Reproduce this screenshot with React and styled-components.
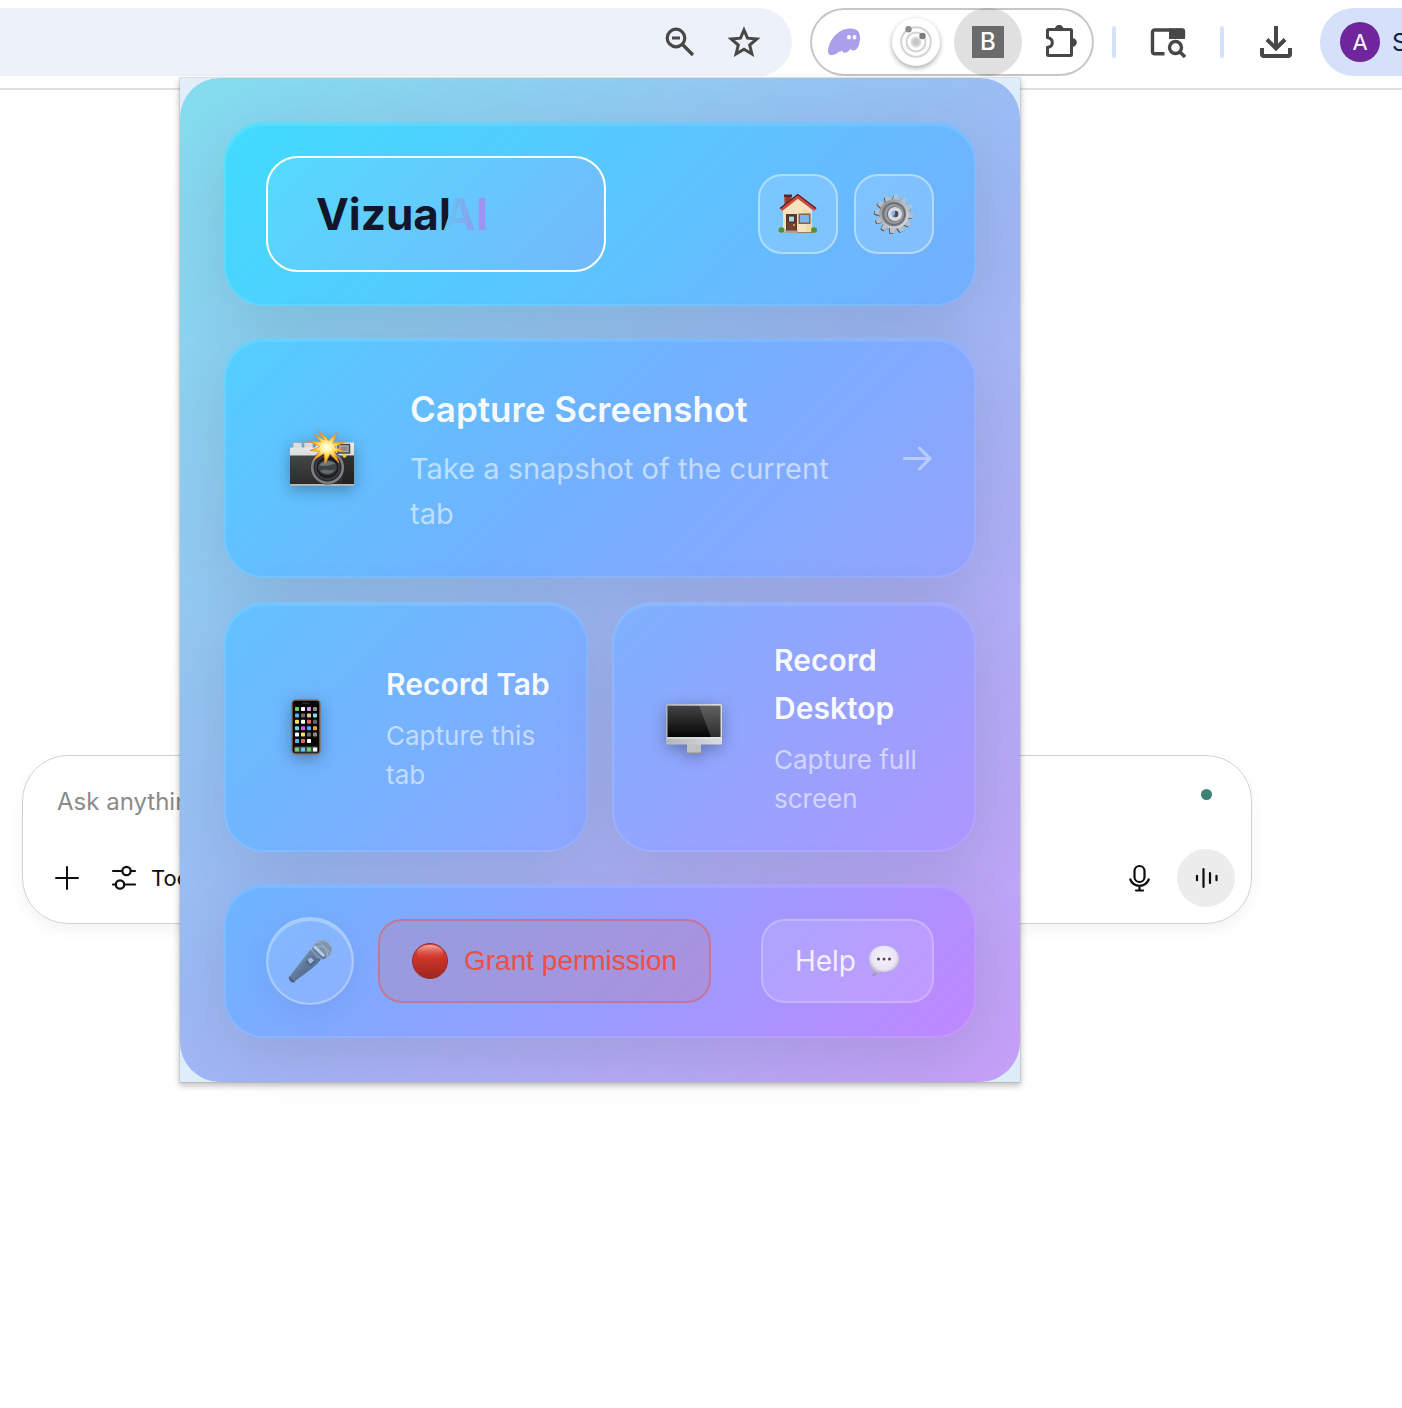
import React from "react";
import styled, { createGlobalStyle, css } from "styled-components";

const GlobalStyle = createGlobalStyle`
  *, *::before, *::after { box-sizing: border-box; }
  body {
    margin: 0;
    background: #ffffff;
    font-family: Inter, "Liberation Sans", sans-serif;
    overflow-x: hidden;
  }
  button, input { font-family: inherit; margin: 0; }
  button { cursor: pointer; }
  svg { display: block; flex: none; }
`;

const Page = styled.div`
  position: relative;
  min-height: 100vh;
  overflow: hidden;
`;

/* ---------- browser toolbar ---------- */

const Toolbar = styled.header`
  display: flex;
  align-items: center;
  gap: 18px;
  height: 90px;
  padding: 8px 0 12px;
  border-bottom: 2px solid #dfe0e1;
`;

const AddressBar = styled.div`
  flex: 1;
  display: flex;
  align-items: center;
  justify-content: flex-end;
  height: 68px;
  padding-right: 16px;
  border-radius: 0 34px 34px 0;
  background: #edf2fa;
`;

const ToolButton = styled.button`
  display: flex;
  align-items: center;
  justify-content: center;
  width: ${(p) => (p.$compact ? 64 : 68)}px;
  height: 68px;
  padding: 0;
  border: 0;
  border-radius: 50%;
  background: ${(p) => (p.$active ? "rgba(0, 0, 0, 0.12)" : "transparent")};
  color: #474747;
`;

const Extensions = styled.div`
  display: flex;
  gap: 4px;
  border-radius: 34px;
  box-shadow: inset 0 0 0 2px #c7c7c7;
`;

const Badge = styled.span`
  display: flex;
  align-items: center;
  justify-content: center;
  width: 48px;
  height: 48px;
  border-radius: 50%;
  background: #ffffff;
  box-shadow: 0 2px 5px rgba(0, 0, 0, 0.35);
`;

const LetterTile = styled.span`
  width: 32px;
  height: 32px;
  background: #6b6b6b;
  color: #ffffff;
  font-size: 24px;
  line-height: 32px;
  font-weight: 500;
  text-align: center;
`;

const Separator = styled.span`
  width: 4px;
  height: 32px;
  border-radius: 2px;
  background: #d5e2fb;
`;

const ProfileGroup = styled.div`
  display: flex;
  gap: 10px;
`;

const Profile = styled.button`
  display: flex;
  align-items: center;
  gap: 12px;
  width: 82px;
  height: 68px;
  padding: 0 0 0 20px;
  border: 0;
  border-radius: 34px 0 0 34px;
  background: #d5e1fb;
  color: #0a1f49;
  font-size: 24px;
  overflow: hidden;
`;

const Avatar = styled.span`
  flex: none;
  width: 40px;
  height: 40px;
  border-radius: 50%;
  background: #6f259b;
  color: #ffffff;
  font-size: 22px;
  line-height: 40px;
  text-align: center;
`;

/* ---------- chat page behind the popup ---------- */

const Chat = styled.main`
  padding: 665px 150px 0 22px;
`;

const Composer = styled.form`
  display: flex;
  flex-direction: column;
  gap: 19px;
  padding: 16px 16px 16px 26px;
  border: 1px solid #d2d2d2;
  border-radius: 46px;
  box-shadow: 0 6px 14px rgba(0, 0, 0, 0.05);
`;

const ComposerRow = styled.div`
  display: flex;
  align-items: center;
  height: 58px;
`;

const Prompt = styled.input`
  flex: 1;
  min-width: 0;
  height: 58px;
  padding: 0 0 0 8px;
  border: 0;
  outline: 0;
  background: transparent;
  color: #0d0d0d;
  font-size: 24px;
  &::placeholder { color: #8a8a8a; opacity: 1; }
`;

const StatusSlot = styled.div`
  display: flex;
  justify-content: center;
  align-self: flex-start;
  width: 58px;
  padding-top: 17px;
`;

const StatusDot = styled.span`
  width: 11px;
  height: 11px;
  border-radius: 50%;
  background: #3c8275;
`;

const ComposerButton = styled.button`
  display: flex;
  align-items: center;
  gap: 14px;
  height: 58px;
  padding: 0 6px;
  border: 0;
  background: transparent;
  color: #0d0d0d;
  font-size: 22px;
`;

const ComposerActions = styled.div`
  display: flex;
  align-items: center;
  gap: 20px;
`;

const Spacer = styled.div`
  flex: 1;
`;

const VoiceButton = styled(ComposerButton)`
  justify-content: center;
  width: 58px;
  padding: 0;
  border-radius: 50%;
  background: #ececec;
`;

/* ---------- extension popup ---------- */

const Popup = styled.section`
  position: absolute;
  top: 78px;
  left: 180px;
  width: 840px;
  background: linear-gradient(135deg, #e2eefb, #dcecf9);
  box-shadow: 0 0 0 1px rgba(0, 0, 0, 0.08), 0 3px 6px 1px rgba(0, 0, 0, 0.24);
`;

const Panel = styled.div`
  display: flex;
  flex-direction: column;
  gap: 32px;
  padding: 44px;
  border-radius: 40px;
  background: linear-gradient(135deg, #83ddee 0%, #9cb9f4 50%, #c69ff7 100%);
`;

const tints = {
  header: "#40dcfd, #5ac6ff 50%, #75adff",
  screenshot: "#53cfff, #72b0ff 50%, #95a2fd",
  tab: "#62c2ff, #75b2ff 50%, #8fa5ff",
  desktop: "#7cb1ff, #96a3fe 50%, #ad95ff",
  footer: "#6ab5ff, #959eff 50%, #c087ff",
};

const glass = css`
  border: 2px solid rgba(255, 255, 255, 0.11);
  border-radius: 40px;
  background: linear-gradient(135deg, ${(p) => tints[p.$tint]}) border-box;
  box-shadow: 0 16px 64px rgba(0, 0, 0, 0.1),
    inset 0 2px 0 rgba(255, 255, 255, 0.1);
`;

const TopCard = styled.div`
  ${glass}
  display: flex;
  align-items: center;
  justify-content: space-between;
  padding: 32px 40px;
`;

const Logo = styled.h1`
  display: flex;
  align-items: center;
  width: 340px;
  height: 116px;
  margin: 0;
  padding: 0 48px;
  border: 2px solid #ffffff;
  border-radius: 32px;
  background: linear-gradient(135deg, rgba(255, 255, 255, 0.08), rgba(150, 170, 245, 0.38));
  color: #12162b;
  font-size: 44px;
  line-height: 56px;
  font-weight: 700;
`;

const LogoAccent = styled.span`
  margin-left: -8px;
  background: linear-gradient(90deg, #5ecbf4, #84a6ef 55%, #ab8bf6);
  background-clip: text;
  -webkit-background-clip: text;
  color: transparent;
`;

const ButtonGroup = styled.div`
  display: flex;
  gap: 16px;
`;

const IconButton = styled.button`
  display: flex;
  align-items: center;
  justify-content: center;
  width: 80px;
  height: 80px;
  padding: 0;
  border: 2px solid rgba(255, 255, 255, 0.4);
  border-radius: 24px;
  background: rgba(255, 255, 255, 0.15);
`;

const Actions = styled.div`
  display: flex;
  flex-direction: column;
  gap: 24px;
`;

const ActionRow = styled.div`
  display: grid;
  grid-template-columns: 1fr 1fr;
  gap: 24px;
`;

const ActionCard = styled.button`
  ${glass}
  display: flex;
  align-items: center;
  gap: 32px;
  padding: ${(p) => (p.$large ? "40px" : "32px")};
  text-align: left;
`;

const ActionIcon = styled.span`
  display: flex;
  flex: none;
  justify-content: center;
  width: ${(p) => (p.$large ? 112 : 96)}px;
  filter: drop-shadow(0 4px 8px rgba(0, 0, 0, 0.3));
`;

const ActionText = styled.span`
  display: flex;
  flex: 1;
  flex-direction: column;
  gap: 8px;
  min-width: 0;
`;

const ActionTitle = styled.span`
  color: rgba(255, 255, 255, 0.95);
  font-size: ${(p) => (p.$large ? 35 : 30)}px;
  line-height: ${(p) => (p.$large ? 58 : 48)}px;
  font-weight: 600;
`;

const ActionNote = styled.span`
  color: rgba(255, 255, 255, 0.57);
  font-size: ${(p) => (p.$large ? 29 : 26)}px;
  line-height: ${(p) => (p.$large ? 45 : 39)}px;
  font-weight: 400;
`;

const BottomCard = styled.div`
  ${glass}
  display: flex;
  align-items: center;
  gap: 24px;
  padding: 31px 40px;
`;

const MicButton = styled.button`
  display: flex;
  align-items: center;
  justify-content: center;
  width: 88px;
  height: 88px;
  padding: 0;
  border: 2px solid rgba(255, 255, 255, 0.3);
  border-radius: 50%;
  background: rgba(255, 255, 255, 0.1);
  box-shadow: 0 8px 32px rgba(0, 0, 0, 0.06),
    inset 0 2px 0 rgba(255, 255, 255, 0.3);
`;

const PillButton = styled.button`
  display: flex;
  align-items: center;
  gap: ${(p) => (p.$alert ? 16 : 12)}px;
  height: 84px;
  padding: 0 32px;
  border: 2px solid ${(p) => (p.$alert ? "rgba(236, 80, 70, 0.45)" : "rgba(255, 255, 255, 0.22)")};
  border-radius: 24px;
  background: ${(p) => (p.$alert ? "rgba(180, 140, 185, 0.45)" : "rgba(255, 255, 255, 0.13)")};
  color: ${(p) => (p.$alert ? "#ec5044" : "rgba(255, 255, 255, 0.85)")};
  font-family: ${(p) => (p.$alert ? '"Liberation Sans", Arial, sans-serif' : "inherit")};
  font-size: 28px;
  white-space: nowrap;
`;

/* ---------- toolbar icons ---------- */

const ZoomOutIcon = () => (
  <svg width="32" height="32" viewBox="0 0 32 32" fill="none" stroke="currentColor" strokeWidth="3.200">
    <circle cx="12" cy="12" r="8.800" />
    <path d="M8 12h8M18.500 18.500l10.500 10.500" />
  </svg>
);

const StarIcon = () => (
  <svg width="32" height="32" viewBox="0 0 32 32" fill="none" stroke="currentColor" strokeWidth="3">
    <path d="M16 4l3.500 8.200 9.200.8-7 6 2.200 9L16 23.300 8.100 28l2.200-9-7-6 9.200-.8z" />
  </svg>
);

const GhostIcon = () => (
  <svg width="32" height="28" viewBox="0 0 32 28">
    <path
      d="M0 23C1 13 9 1 22 .6 29 .2 32 4 32 9.500c0 7-2.600 13-6.500 13-2 0-2.500-.5-3-1.700-1.200 2.200-3.500 4-5.600 4-1.900 0-2.400-1.200-2.900-2.600-.8 1.300-2 1.900-3.100 1.300C9.500 25 6.500 27.200 3.500 27.200 1.200 27 0 25.500 0 23z"
      fill="#ab9fec"
    />
    <ellipse cx="21" cy="9.300" rx="1.900" ry="2.300" fill="#fff" />
    <ellipse cx="26.500" cy="9.300" rx="1.900" ry="2.300" fill="#fff" />
  </svg>
);

const OrbitIcon = () => (
  <svg width="34" height="34" viewBox="0 0 34 34" fill="none" stroke="#d3d3d3" strokeWidth="2">
    <circle cx="17" cy="17" r="14.800" />
    <circle cx="17" cy="17" r="9.500" />
    <circle cx="17" cy="17" r="4.500" fill="#c6c6c6" stroke="#dddddd" />
    <circle cx="9.500" cy="4.300" r="3.200" fill="#8d8d8d" stroke="none" />
    <circle cx="23.500" cy="11" r="3.200" fill="#7d7d7d" stroke="none" />
  </svg>
);

const PuzzleIcon = () => (
  <svg width="34" height="34" viewBox="0 0 34 34">
    <path
      d="M5.500 4.500h22a1 1 0 0 1 1 1v24a1 1 0 0 1-1 1h-22a1 1 0 0 1-1-1v-7.200c3.200-.3 4.800-2 4.800-4.600S7.700 13.100 4.500 12.800V5.500a1 1 0 0 1 1-1z"
      fill="none"
      stroke="currentColor"
      strokeWidth="3"
      strokeLinejoin="round"
    />
    <path d="M12 4a4.200 4.200 0 0 1 8.400 0zM29 13.300h.6a4.200 4.200 0 0 1 0 8.400H29z" fill="currentColor" />
  </svg>
);

const TabSearchIcon = () => (
  <svg width="36" height="32" viewBox="0 0 36 32" fill="none" stroke="currentColor" strokeWidth="3.400">
    <path d="M14.500 27.800H4.500a2 2 0 0 1-2-2V6a2 2 0 0 1 2-2h27a2 2 0 0 1 2 2v5" />
    <path d="M19 2.500h14a2 2 0 0 1 2 2V13H19z" fill="currentColor" stroke="none" />
    <circle cx="25.500" cy="21.500" r="6" />
    <path d="M29.500 25.500l5.500 5.500" />
  </svg>
);

const DownloadIcon = () => (
  <svg width="32" height="34" viewBox="0 0 32 34" fill="none" stroke="currentColor" strokeWidth="4">
    <path d="M16 1v21M7 14.500l9 9 9-9" />
    <path d="M2 23v6.500a1.500 1.500 0 0 0 1.500 1.500h25a1.500 1.500 0 0 0 1.500-1.500V23" />
  </svg>
);

/* ---------- composer icons ---------- */

const PlusIcon = () => (
  <svg width="24" height="24" viewBox="0 0 24 24" stroke="currentColor" strokeWidth="2" strokeLinecap="round">
    <path d="M12 1v22M1 12h22" />
  </svg>
);

const SlidersIcon = () => (
  <svg width="26" height="26" viewBox="0 0 26 26" fill="none" stroke="currentColor" strokeWidth="2.200" strokeLinecap="round">
    <path d="M2 6h9M20 6h4M2 19.500h3M14 19.500h10" />
    <circle cx="15.500" cy="6" r="4.200" />
    <circle cx="9" cy="19.500" r="4.200" />
  </svg>
);

const MicIcon = () => (
  <svg width="22" height="28" viewBox="0 0 22 28" fill="none" stroke="currentColor" strokeWidth="2.200" strokeLinecap="round">
    <rect x="5.500" y="2" width="10" height="16" rx="5" />
    <path d="M1.300 15.500c3.500 8.500 14.900 8.500 18.400 0M10.500 22v4.500M7 26.500h7" />
  </svg>
);

const VoiceIcon = () => (
  <svg width="24" height="22" viewBox="0 0 24 22" stroke="currentColor" strokeWidth="2.200" strokeLinecap="round">
    <path d="M3 8.800v4.400M9.500 2v18M16 6v10M22.500 8.800v4.400" />
  </svg>
);

/* ---------- popup drawings ---------- */

const HouseDrawing = () => (
  <svg width="40" height="40" viewBox="0 0 40 40">
    <path d="M6.500 1h7v12h-7z" fill="#943a2a" />
    <path d="M6 .5h8V3H6z" fill="#60261f" />
    <path d="M5 16L20 4l14 12v22H5z" fill="#f3e2bd" />
    <path d="M25 14l9 6v18h-5z" fill="#e5cf9f" opacity=".5" />
    <path d="M3 15.500L19.800 2.300 37.500 15.500" fill="none" stroke="#d54838" strokeWidth="4" />
    <path d="M2 14.500L19.800.6 38 14.500" fill="none" stroke="#4a2230" strokeWidth="1.200" />
    <path d="M8 20h11v18H8z" fill="#5b372d" />
    <path d="M9.500 21.500h8V37h-8z" fill="#75402f" />
    <path d="M10.500 22h6v6h-6z" fill="#b1d2ed" stroke="#492a22" />
    <circle cx="16" cy="31" r="1" fill="#e4b83c" />
    <path d="M20.500 19.500h12v10.500h-12z" fill="#81644d" />
    <path d="M22 21h9v7.500h-9z" fill="#82b5e7" />
    <ellipse cx="3.500" cy="36" rx="3" ry="2.800" fill="#5a8e2f" />
    <ellipse cx="36" cy="36" rx="3" ry="2.800" fill="#5a8e2f" />
    <path d="M7 36.500h13v2.500H7z" fill="#aaa098" />
    <path d="M20 38h16v1H20z" fill="#8d806d" />
  </svg>
);

const GearDrawing = () => (
  <svg width="40" height="40" viewBox="0 0 40 40">
    <defs>
      <linearGradient id="gearMetal" x1="0" y1="0" x2="1" y2="1">
        <stop offset="0" stopColor="#85878b" />
        <stop offset=".5" stopColor="#b9bcc2" />
        <stop offset="1" stopColor="#dcdde2" />
      </linearGradient>
    </defs>
    <g transform="translate(-.9 .8)" fill="#55565b">
      {Array.from({ length: 12 }, (_, i) => (
        <path key={i} d="M17 7L18.200.8h3.600L23 7z" transform={`rotate(${i * 30 + 6} 20 20)`} />
      ))}
    </g>
    <g fill="#bcbfc5">
      {Array.from({ length: 12 }, (_, i) => (
        <path key={i} d="M17 7L18.200.8h3.600L23 7z" transform={`rotate(${i * 30 + 6} 20 20)`} />
      ))}
    </g>
    <circle cx="20" cy="20" r="14.800" fill="url(#gearMetal)" />
    <circle cx="20" cy="20" r="12.200" fill="#787c82" />
    <circle cx="20" cy="20" r="10.500" fill="#989ca2" stroke="#61656b" strokeWidth="1" />
    <circle cx="20.500" cy="20" r="7.700" fill="#6d7177" />
    <circle cx="21" cy="20" r="5.200" fill="none" stroke="#d8dadf" strokeWidth="3.800" />
    <path d="M21 16.700a3.300 3.300 0 0 1 0 6.600z" fill="#3f4b5e" />
    <path d="M21 16.700a3.300 3.300 0 0 0-2.500 5.500c2-.8 3-2.500 2.500-5.500z" fill="#7fb8f8" />
  </svg>
);

const CameraDrawing = () => (
  <svg width="68" height="56" viewBox="0 0 68 56">
    <defs>
      <linearGradient id="cameraTop" x1="0" y1="0" x2="0" y2="1">
        <stop offset="0" stopColor="#eceded" />
        <stop offset="1" stopColor="#b4b7ba" />
      </linearGradient>
      <linearGradient id="cameraBody" x1="0" y1="0" x2="0" y2="1">
        <stop offset="0" stopColor="#454545" />
        <stop offset="1" stopColor="#2b2b2b" />
      </linearGradient>
      <radialGradient id="flashCore">
        <stop offset="0" stopColor="#fff" />
        <stop offset=".25" stopColor="#fff5a8" />
        <stop offset=".6" stopColor="#ffc934" />
        <stop offset="1" stopColor="#ee8a1f" />
      </radialGradient>
    </defs>
    <path d="M5 12.500h9v7H5zM16 12.500h9v7h-9z" fill="#dadcde" stroke="#9a9da0" strokeWidth=".7" />
    <path d="M2 19c0-1 .7-1.500 1.500-1.500H27l3-5h36V55H2z" fill="url(#cameraTop)" />
    <path d="M2 25.500h64v29H2z" fill="url(#cameraBody)" />
    <path d="M54 25.500h12v29H54z" fill="#111" opacity=".35" />
    <path d="M2 54h64v1.700H2z" fill="#b9bbbd" />
    <path d="M50 14.500h11.500v8.500H50z" fill="#b5aea5" stroke="#484848" strokeWidth="1.500" />
    <path d="M52.500 16.500h7v4.500h-7z" fill="#8f8982" />
    <circle cx="56.500" cy="25.800" r="2" fill="#f4cd39" />
    <circle cx="39.500" cy="37.500" r="17" fill="#27292a" />
    <circle cx="39.500" cy="37.500" r="15.300" fill="none" stroke="#7b7f82" strokeWidth="2.600" />
    <circle cx="39.500" cy="37.500" r="11.800" fill="#1c1e1f" stroke="#3f4244" strokeWidth="1.500" />
    <ellipse cx="39.500" cy="37.500" rx="9.500" ry="7.500" fill="#3f4345" />
    <path d="M31 35c5-5 12-5 17-1-6 0-10 4-17 1z" fill="#6e7476" />
    <path d="M32 41c5-3 11 1 15-2-3 6-11 6-15 2z" fill="#676d6f" />
    <path
      d="M40.500 11L48.800 2.300 45 13.300 57.500 11.500 46.500 17 56 21 46.500 21.500 51 33 42 24 37 34 36 23.500 25.500 30 31.500 21.500 22 20.500 32 16.500 20 11 33 12 26 4 36.500 10 30 .5 38.500 8z"
      fill="url(#flashCore)"
      stroke="#ec8727"
      strokeWidth=".7"
    />
  </svg>
);

const appColors = [
  "#68d574", "#ffffff", "#d69be8", "#8e8e92",
  "#55b8fb", "#69696e", "#e1c9a4", "#7adff0",
  "#f8df62", "#ffffff", "#ec625c", "#64646a",
  "#76dbe4", "#cd58df", "#51aaf6", "#f29c38",
  "#ffffff", "#f7df62", "#6c6c70", "#8d8d91",
  "#55b8fb", "#ec625c", "#ffffff",
];

const PhoneDrawing = () => (
  <svg width="30" height="56" viewBox="0 0 30 56">
    <rect x="1" y="1" width="28" height="54" rx="3.500" fill="#070707" stroke="#8a6e60" strokeWidth="1.400" />
    <rect x="11" y="3.500" width="8" height="1.600" rx=".8" fill="#29292b" />
    {appColors.map((fill, i) => (
      <rect key={i} x={4 + (i % 4) * 6} y={8 + Math.floor(i / 4) * 6.4} width="4" height="4" rx=".8" fill={fill} />
    ))}
    <rect x="3" y="47.500" width="24" height="6" rx="1" fill="#4c4c50" />
    {["#68d574", "#62c9f4", "#68d574", "#ffffff"].map((fill, i) => (
      <rect key={i} x={4 + i * 6} y="48.500" width="4" height="4" rx=".8" fill={fill} />
    ))}
  </svg>
);

const DesktopDrawing = () => (
  <svg width="56" height="54" viewBox="0 -4 56 54">
    <defs>
      <linearGradient id="screenGlass" x1="0" y1="0" x2="0" y2="1">
        <stop offset="0" stopColor="#434345" />
        <stop offset="1" stopColor="#050506" />
      </linearGradient>
      <linearGradient id="screenChin" x1="0" y1="0" x2="1" y2="0">
        <stop offset="0" stopColor="#b4b6b9" />
        <stop offset="1" stopColor="#dcdddf" />
      </linearGradient>
    </defs>
    <path d="M21 40h14v10H21z" fill="#bfc1c4" />
    <path d="M21 48.500h14V50H21z" fill="#8c8e93" />
    <rect width="56" height="40.500" rx="1.500" fill="url(#screenChin)" />
    <path d="M1.500 1.800h53V33h-53z" fill="url(#screenGlass)" />
    <path d="M33 1.800h21.500V33H45z" fill="#ffffff" opacity=".16" />
    <path d="M1 33.500h54v1H1z" fill="#edeef0" />
  </svg>
);

const ArrowIcon = () => (
  <svg width="32" height="32" viewBox="0 0 32 32" fill="none" stroke="#ffffff" strokeWidth="3" strokeLinecap="round" strokeLinejoin="round" opacity=".42">
    <path d="M2.500 16.500h25M17.500 6L28 16.500 17.500 27" />
  </svg>
);

const MicrophoneDrawing = () => (
  <svg width="44" height="44" viewBox="0 0 44 44">
    <defs>
      <linearGradient id="micBody" x1="0" y1="0" x2="1" y2="1">
        <stop offset="0" stopColor="#8fa9ca" />
        <stop offset=".5" stopColor="#5f7898" />
        <stop offset="1" stopColor="#405a7c" />
      </linearGradient>
    </defs>
    <path d="M22.500 10.500L33 20.500C25 30 13 37 7 42.500c-3 2-7-2-5.500-5z" fill="url(#micBody)" />
    <path d="M1 37l6 6c-3 2-7-1.500-6-6z" fill="#4b6382" />
    <circle cx="34" cy="10.500" r="9.700" fill="#7f94af" />
    <path d="M27 5c5-6 13-3 15.500 2M26 9c7-4 13 0 16 5M29 3c5 1 11 8 11 15M25 6c5 2 10 8 11 14" fill="none" stroke="#a4b6cb" strokeWidth=".9" />
    <path d="M24 10l11 10.500 3.500-1.800L26.500 6.500z" fill="#63799a" />
    <path d="M26 7.500l10 9.500" stroke="#b7d0ec" strokeWidth="2.500" />
    <path d="M17.500 23l5-5 5 4.500-5 5z" fill="#4e668a" />
    <path d="M19.500 20.500l3.500-2 3 3-4 3.500z" fill="#9dbce3" />
  </svg>
);

const RecordDot = () => (
  <svg width="36" height="36" viewBox="0 0 36 36">
    <defs>
      <linearGradient id="recordFill" x1="0" y1="0" x2="0" y2="1">
        <stop offset="0" stopColor="#d4493d" />
        <stop offset=".4" stopColor="#d0342a" />
        <stop offset="1" stopColor="#9c261f" />
      </linearGradient>
      <linearGradient id="recordShine" x1="0" y1="0" x2="0" y2="1">
        <stop offset="0" stopColor="#f5aca5" />
        <stop offset="1" stopColor="#d4382e" stopOpacity="0" />
      </linearGradient>
    </defs>
    <circle cx="18" cy="18" r="17.500" fill="url(#recordFill)" stroke="#9b2f2b" />
    <ellipse cx="18" cy="9.500" rx="13" ry="7.500" fill="url(#recordShine)" />
  </svg>
);

const BubbleDrawing = () => (
  <svg width="32" height="32" viewBox="0 0 32 32">
    <defs>
      <radialGradient id="bubbleFill" cx=".5" cy=".38" r=".62">
        <stop offset="0" stopColor="#f5f3fb" />
        <stop offset=".65" stopColor="#e9e5f4" />
        <stop offset="1" stopColor="#9c94ae" />
      </radialGradient>
    </defs>
    <path d="M16 .8c8.600 0 15.200 5.500 15.200 13.200S24.600 27 16 27c-1.500 0-2.600-.1-4-.4-2.200 2.500-5 4.400-8.200 4.800 1.600-1.800 2.300-4 2-6.500C2.700 22.500.8 18.800.8 14 .8 6.300 7.400.8 16 .8z" fill="url(#bubbleFill)" />
    <g fill="#4b455f">
      <circle cx="10.500" cy="14" r="1.500" />
      <circle cx="16" cy="14" r="1.500" />
      <circle cx="21.500" cy="14" r="1.500" />
    </g>
  </svg>
);

/* ---------- composition ---------- */

function Action({ icon, title, note, tint, large, arrow }) {
  return (
    <ActionCard type="button" $large={large} $tint={tint}>
      <ActionIcon $large={large}>{icon}</ActionIcon>
      <ActionText>
        <ActionTitle $large={large}>{title}</ActionTitle>
        <ActionNote $large={large}>{note}</ActionNote>
      </ActionText>
      {arrow && <ArrowIcon />}
    </ActionCard>
  );
}

export default function App() {
  return (
    <Page>
      <GlobalStyle />
      <Toolbar>
        <AddressBar>
          <ToolButton $compact aria-label="Zoom"><ZoomOutIcon /></ToolButton>
          <ToolButton $compact aria-label="Bookmark"><StarIcon /></ToolButton>
        </AddressBar>
        <Extensions>
          <ToolButton aria-label="Ghost"><GhostIcon /></ToolButton>
          <ToolButton aria-label="Orbit"><Badge><OrbitIcon /></Badge></ToolButton>
          <ToolButton $active><LetterTile>B</LetterTile></ToolButton>
          <ToolButton aria-label="Extensions"><PuzzleIcon /></ToolButton>
        </Extensions>
        <Separator />
        <ToolButton aria-label="Search tabs"><TabSearchIcon /></ToolButton>
        <Separator />
        <ProfileGroup>
          <ToolButton aria-label="Downloads"><DownloadIcon /></ToolButton>
          <Profile><Avatar>A</Avatar>S</Profile>
        </ProfileGroup>
      </Toolbar>

      <Chat>
        <Composer onSubmit={(e) => e.preventDefault()}>
          <ComposerRow>
            <Prompt placeholder="Ask anything" aria-label="Ask anything" />
            <StatusSlot><StatusDot /></StatusSlot>
          </ComposerRow>
          <ComposerRow>
            <ComposerActions>
              <ComposerButton type="button" aria-label="Add"><PlusIcon /></ComposerButton>
              <ComposerButton type="button"><SlidersIcon />Tools</ComposerButton>
            </ComposerActions>
            <Spacer />
            <ComposerActions>
              <ComposerButton type="button" aria-label="Dictate"><MicIcon /></ComposerButton>
              <VoiceButton type="button" aria-label="Voice mode"><VoiceIcon /></VoiceButton>
            </ComposerActions>
          </ComposerRow>
        </Composer>
      </Chat>

      <Popup>
        <Panel>
          <TopCard $tint="header">
            <Logo>Vizual<LogoAccent>AI</LogoAccent></Logo>
            <ButtonGroup>
              <IconButton aria-label="Home"><HouseDrawing /></IconButton>
              <IconButton aria-label="Settings"><GearDrawing /></IconButton>
            </ButtonGroup>
          </TopCard>
          <Actions>
            <Action large arrow tint="screenshot" icon={<CameraDrawing />} title="Capture Screenshot" note="Take a snapshot of the current tab" />
            <ActionRow>
              <Action tint="tab" icon={<PhoneDrawing />} title="Record Tab" note="Capture this tab" />
              <Action tint="desktop" icon={<DesktopDrawing />} title="Record Desktop" note="Capture full screen" />
            </ActionRow>
          </Actions>
          <BottomCard $tint="footer">
            <MicButton aria-label="Microphone"><MicrophoneDrawing /></MicButton>
            <PillButton $alert><RecordDot />Grant permission</PillButton>
            <Spacer />
            <PillButton>Help <BubbleDrawing /></PillButton>
          </BottomCard>
        </Panel>
      </Popup>
    </Page>
  );
}
